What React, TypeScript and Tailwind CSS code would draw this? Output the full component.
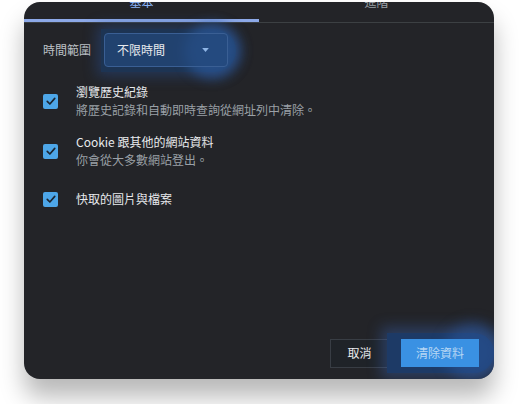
import React from 'react';

const font = { fontFamily: '"Noto Sans CJK TC", "Noto Sans", sans-serif' };

function Check() {
  return (
    <div className="w-[15px] h-[15px] rounded-[2px] bg-[#4da6e8] flex items-center justify-center shrink-0">
      <svg viewBox="0 0 16 16" className="w-[12px] h-[12px]">
        <path d="M3 8.5 L6.5 12 L13 4.5" fill="none" stroke="#1b2530" strokeWidth="2.2" strokeLinecap="round" strokeLinejoin="round" />
      </svg>
    </div>
  );
}

function Option({ title, sub, className }: { title: string; sub?: string; className?: string }) {
  return (
    <div className={'flex items-center ' + (className ?? '')}>
      <div className="w-[52px] pl-[19px]">
        <Check />
      </div>
      <div className="flex flex-col">
        <span className="text-[12px] leading-[18px] text-[#e8eaed]">{title}</span>
        {sub && <span className="text-[12px] leading-[18px] text-[#9aa0a6]">{sub}</span>}
      </div>
    </div>
  );
}

export default function App() {
  return (
    <div className="w-[519px] h-[404px] bg-white overflow-hidden" style={font}>
      <div className="ml-[24px] mt-[2px] w-[470px] h-[377px] bg-[#232428] rounded-[16px] overflow-hidden flex flex-col shadow-[0_18px_24px_rgba(0,0,0,0.28)]">
        {/* Tabs */}
        <div className="flex h-[17px] shrink-0">
          <div className="w-[235px] flex justify-center">
            <span className="-mt-[9px] text-[12px] leading-[18px] text-[#8ab4f8]">基本</span>
          </div>
          <div className="flex-1 flex justify-center">
            <span className="-mt-[9px] text-[12px] leading-[18px] text-[#9aa0a6]">進階</span>
          </div>
        </div>
        <div className="h-[4px] border-b border-[#3c4043] shrink-0">
          <div className="w-[235px] h-[3px] bg-[#8da9e8]" />
        </div>

        {/* Time range */}
        <div className="flex items-center h-[44px] mt-[5px] pl-[19px]">
          <span className="text-[12px] text-[#bdc1c6] w-[58px]">時間範圍</span>
          <div className="relative w-[135px] h-[43px] rounded-r-full rounded-l-[14px] bg-[#1d3453] shadow-[0_0_14px_4px_rgba(40,80,150,0.45)] flex items-center">
            <div className="absolute right-[-4px] top-[-6px] w-[56px] h-[56px] rounded-full bg-[#2d5fa8]/60 blur-[6px]" />
            <div className="relative ml-[3px] w-[124px] h-[34px] rounded-[4px] border border-[#3a5f94] bg-[#23487c]/70 flex items-center justify-between pl-[12px] pr-[18px]">
              <span className="text-[12px] text-[#e8eaed]">不限時間</span>
              <svg viewBox="0 0 10 6" className="w-[7px] h-[4px]">
                <path d="M0 0 L10 0 L5 6 Z" fill="#8fb6e6" />
              </svg>
            </div>
          </div>
        </div>

        {/* Options */}
        <div className="flex flex-col mt-[11px]">
          <Option title="瀏覽歷史紀錄" sub="將歷史記錄和自動即時查詢從網址列中清除。" />
          <Option className="mt-[14px]" title="Cookie 跟其他的網站資料" sub="你會從大多數網站登出。" />
          <Option className="mt-[21px]" title="快取的圖片與檔案" />
        </div>

        {/* Buttons */}
        <div className="mt-auto mb-[6px] flex justify-end items-center">
          <button className="w-[59px] h-[29px] bg-[#1f2328] border border-[#383d44] text-[12px] text-[#e8eaed] mr-[-2px]">
            取消
          </button>
          <div className="relative w-[107px] h-[40px] rounded-l-[18px] rounded-r-full bg-[#1d3a66] shadow-[0_0_14px_6px_rgba(60,110,200,0.35)] flex items-center pl-[14px]">
            <div className="absolute right-[-8px] top-[-10px] w-[58px] h-[58px] rounded-full bg-[#2b5aa3]/50 blur-[7px]" />
            <button className="relative w-[78px] h-[28px] bg-[#3a91e3] text-[12px] text-[#b7d7f4]">
              清除資料
            </button>
          </div>
        </div>
      </div>
    </div>
  );
}
